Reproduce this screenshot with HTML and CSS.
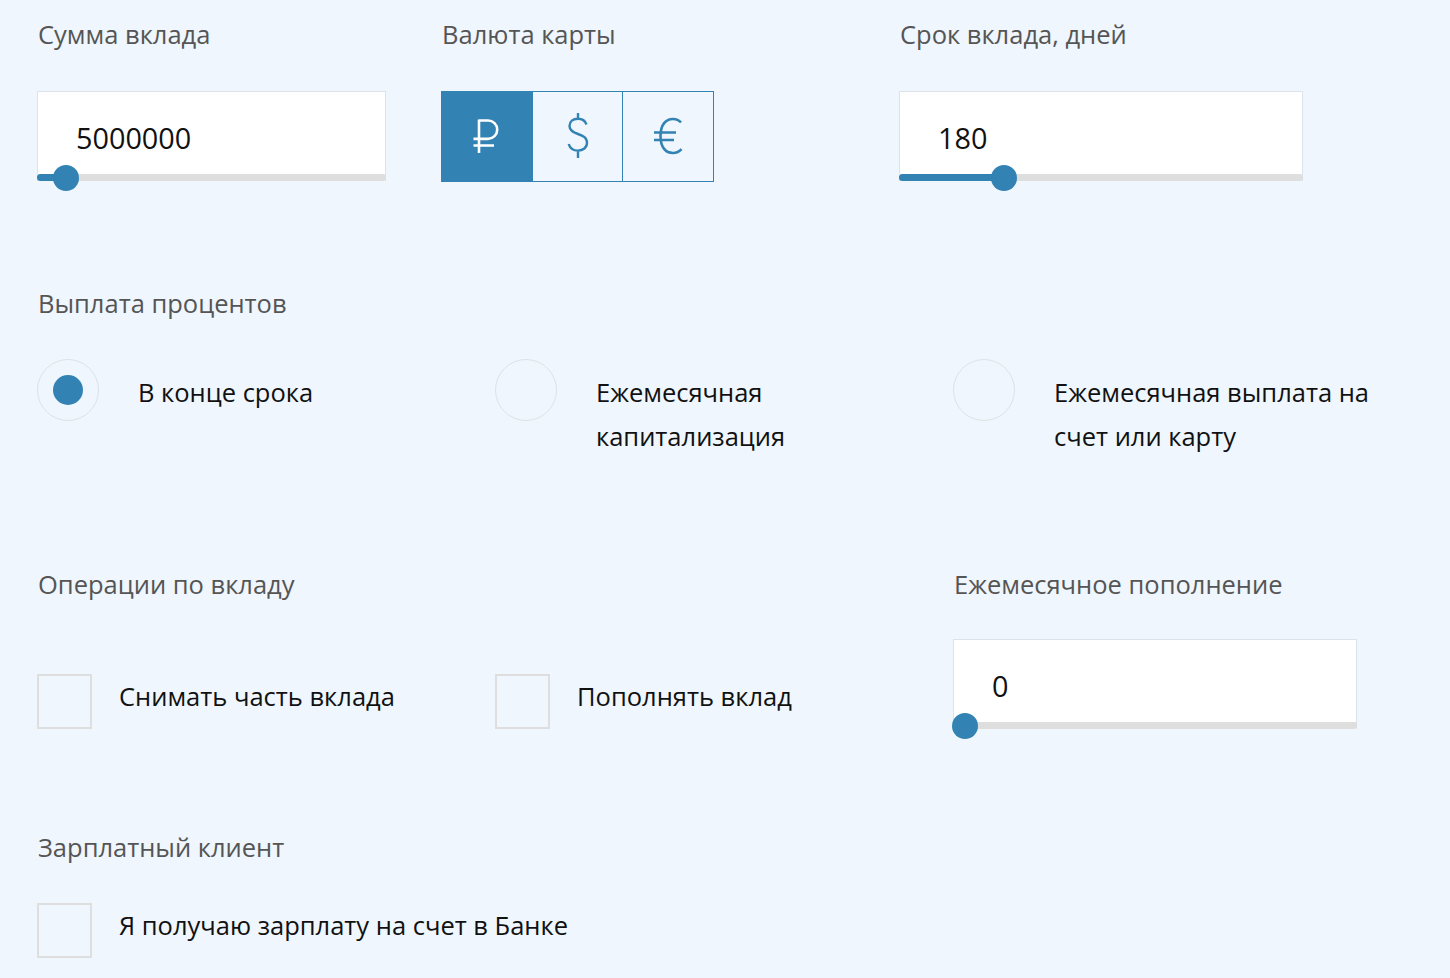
FILE: index.html
```html
<!DOCTYPE html>
<html lang="ru">
<head>
<meta charset="utf-8">
<link rel="stylesheet" href="styles.css">
</head>
<body>
<div class="page">
  <section class="row-top">
    <div class="field">
      <div class="label">Сумма вклада</div>
      <div class="input w349">
        <div class="value">5000000</div>
        <div class="track"><div class="fill" style="width:29px"></div><div class="thumb" style="left:29px"></div></div>
      </div>
    </div>
    <div class="field">
      <div class="label">Валюта карты</div>
      <div class="currency">
        <div class="cur active">
          <svg width="30" height="36" viewBox="0 0 30 36"><path d="M7 1.5V35M7 2.5H16a9.2 9.2 0 0 1 0 18.4H1.5M1.5 27.5H22" fill="none" stroke="#fff" stroke-width="2.6"/></svg>
        </div>
        <div class="cur">
          <svg width="26" height="48" viewBox="0 0 26 48"><path d="M21.5 12.5C20 8.5 17 6.8 13 6.8 8 6.8 4.5 9.6 4.5 14c0 4.6 3.6 6.3 8.5 8 5.2 1.8 9 3.6 9 8.8 0 4.8-4 7.8-9 7.8-4.6 0-8-2.2-9.3-6.6M13 1v6M13 38.5V46" fill="none" stroke="#3282b4" stroke-width="2.4"/></svg>
        </div>
        <div class="cur">
          <svg width="32" height="42" viewBox="0 0 32 42"><path d="M29 7.5C27 5.2 24.3 4 21 4 13.5 4 8.5 10 8.5 21S13.5 38 21 38c3.5 0 6.3-1.3 8.5-3.8M2 17.5H24M2 25H22" fill="none" stroke="#3282b4" stroke-width="2.6"/></svg>
        </div>
      </div>
    </div>
    <div class="field">
      <div class="label">Срок вклада, дней</div>
      <div class="input w404">
        <div class="value">180</div>
        <div class="track"><div class="fill" style="width:105px"></div><div class="thumb" style="left:105px"></div></div>
      </div>
    </div>
  </section>

  <section class="block payout">
    <div class="label">Выплата процентов</div>
    <div class="options">
      <div class="radio-item">
        <div class="radio checked"></div>
        <div class="opt-text">В конце срока</div>
      </div>
      <div class="radio-item">
        <div class="radio"></div>
        <div class="opt-text">Ежемесячная<br>капитализация</div>
      </div>
      <div class="radio-item">
        <div class="radio"></div>
        <div class="opt-text">Ежемесячная выплата на<br>счет или карту</div>
      </div>
    </div>
  </section>

  <section class="block ops">
    <div class="label span2">Операции по вкладу</div>
    <div class="label">Ежемесячное пополнение</div>
    <div class="check-item">
      <div class="checkbox"></div>
      <div class="opt-text">Снимать часть вклада</div>
    </div>
    <div class="check-item">
      <div class="checkbox"></div>
      <div class="opt-text">Пополнять вклад</div>
    </div>
    <div class="input w404">
      <div class="value">0</div>
      <div class="track"><div class="fill" style="width:12px"></div><div class="thumb" style="left:12px"></div></div>
    </div>
  </section>

  <section class="block salary">
    <div class="label">Зарплатный клиент</div>
    <div class="check-item">
      <div class="checkbox"></div>
      <div class="opt-text">Я получаю зарплату на счет в Банке</div>
    </div>
  </section>
</div>
</body>
</html>
```

FILE: styles.css
```css
html, body {
  margin: 0;
  padding: 0;
  background: #eff6fd;
  font-family: "Open Sans", "Noto Sans", sans-serif;
}
.page {
  padding: 18px 0 0 37px;
  width: 1413px;
  height: 959px;
  box-sizing: border-box;
}
.label {
  font-size: 25.5px;
  line-height: 32px;
  color: #555;
  padding-left: 1px;
}
.row-top {
  display: grid;
  grid-template-columns: 404px 458px 404px;
}
.field .label {
  margin-bottom: 41px;
}
.input {
  position: relative;
  box-sizing: border-box;
  height: 90px;
  background: #fff;
  border: 1px solid #dde3ea;
  border-bottom: none;
  display: flex;
  flex-direction: column;
}
.w349 { width: 349px; }
.w404 { width: 404px; }
.value {
  flex: 1;
  font-size: 28.8px;
  line-height: 28px;
  padding: 32px 0 0 38px;
  color: #111;
}
.track {
  position: relative;
  height: 7px;
  margin: 0 -1px;
  background: #dedede;
  border-radius: 0 3px 3px 0;
}
.fill {
  height: 7px;
  background: #3282b4;
  border-radius: 4px 0 0 4px;
}
.thumb {
  position: absolute;
  top: -9px;
  width: 26px;
  height: 26px;
  margin-left: -13px;
  border-radius: 50%;
  background: #3282b4;
}
.currency {
  display: flex;
  width: 273px;
  height: 91px;
  box-sizing: border-box;
  border: 1px solid #3282b4;
}
.cur {
  flex: 1;
  display: flex;
  align-items: center;
  justify-content: center;
  border-left: 1px solid #3282b4;
  padding-bottom: 2px;
}
.cur:first-child { border-left: none; }
.cur.active { background: #3282b4; }

.block { display: block; }
.payout { margin-top: 105px; }
.payout .label { margin-bottom: 40px; }
.options {
  display: grid;
  grid-template-columns: 458px 458px 458px;
}
.radio-item, .check-item {
  display: flex;
  align-items: flex-start;
}
.radio {
  flex: none;
  box-sizing: border-box;
  width: 62px;
  height: 62px;
  border-radius: 50%;
  border: 1px solid #dfe2e5;
  display: flex;
  align-items: center;
  justify-content: center;
  margin-right: 39px;
}
.radio.checked::after {
  content: "";
  width: 30px;
  height: 30px;
  border-radius: 50%;
  background: #3282b4;
}
.opt-text {
  font-size: 25.5px;
  line-height: 44px;
  color: #111;
  padding-top: 11px;
}
.ops {
  margin-top: 110px;
  display: grid;
  grid-template-columns: 458px 458px 404px;
  row-gap: 39px;
}
.ops .span2 { grid-column: span 2; }
.ops .label:last-of-type { padding-left: 0; }
.ops .check-item { margin-top: 35px; }
.checkbox {
  flex: none;
  box-sizing: border-box;
  width: 55px;
  height: 55px;
  border: 2px solid #dedede;
  margin-right: 27px;
}
.check-item .opt-text { padding-top: 0; }
.salary { margin-top: 102px; }
.salary .label { margin-bottom: 40px; }
```
